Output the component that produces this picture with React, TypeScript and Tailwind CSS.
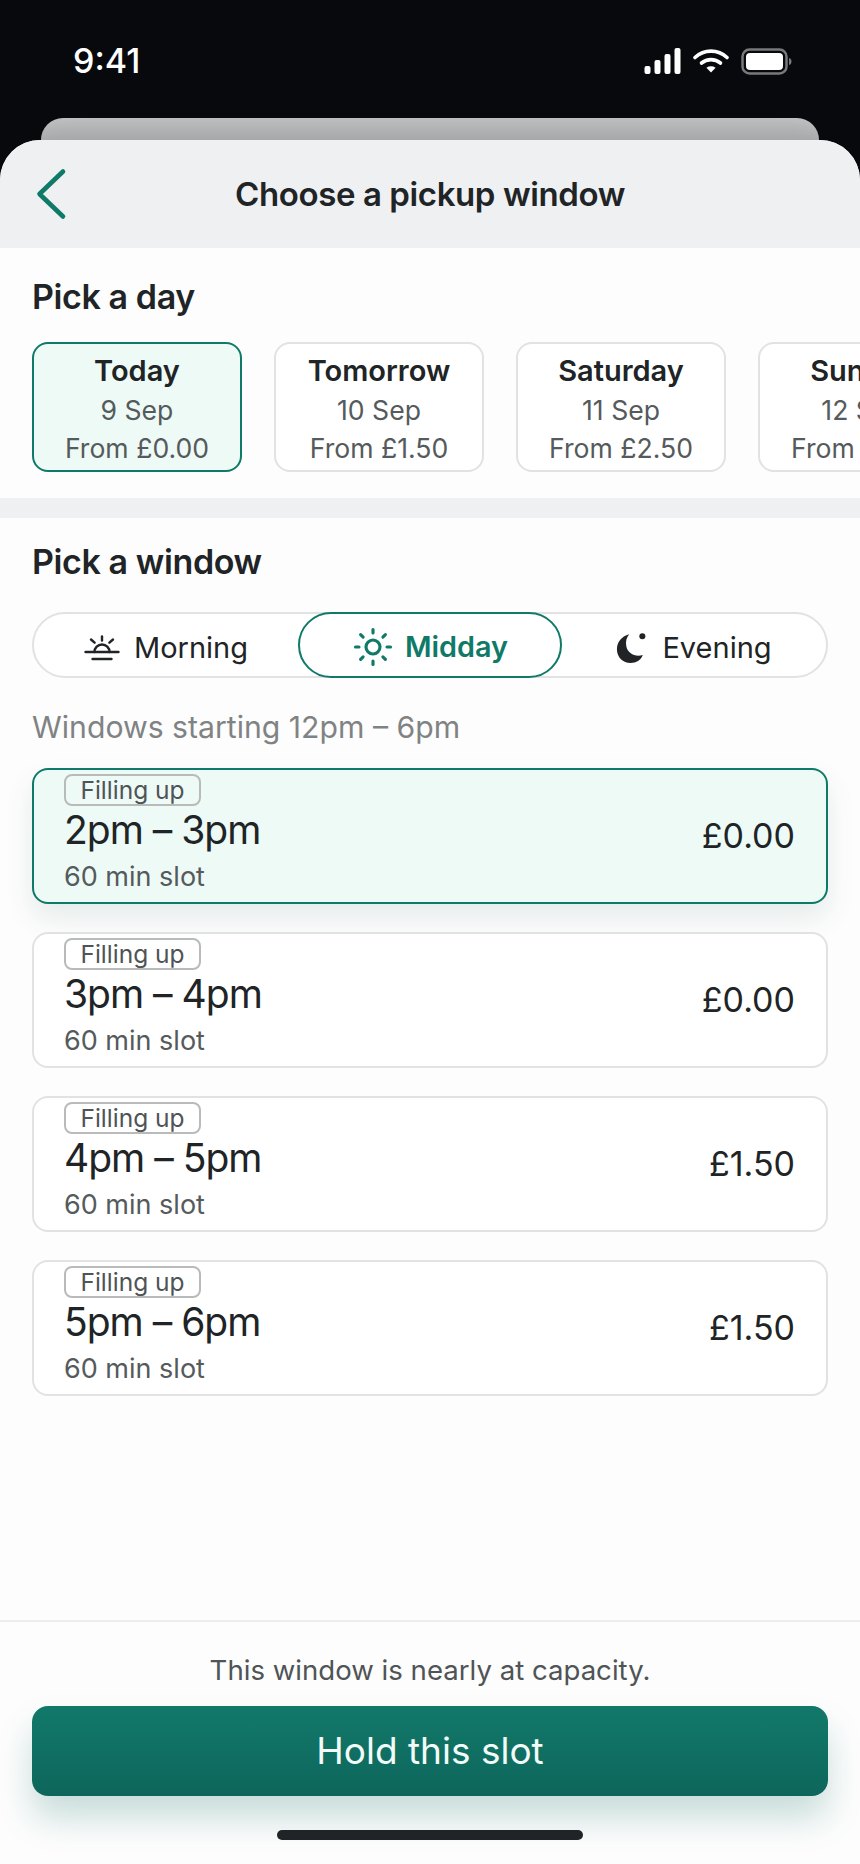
import { Sun } from "lucide-react";

const days = [
  { name: "Today", date: "9 Sep", price: "From £0.00", active: true },
  { name: "Tomorrow", date: "10 Sep", price: "From £1.50" },
  { name: "Saturday", date: "11 Sep", price: "From £2.50" },
  { name: "Sunday", date: "12 Sep", price: "From £2.50" },
];

const slots = [
  { time: "2pm – 3pm", price: "£0.00", active: true },
  { time: "3pm – 4pm", price: "£0.00" },
  { time: "4pm – 5pm", price: "£1.50" },
  { time: "5pm – 6pm", price: "£1.50" },
];

function StatusIcons() {
  return (
    <div className="flex items-start gap-[12px]">
      <svg width="37" height="26" viewBox="0 0 37 26" fill="white">
        <rect x="0.5" y="18" width="6" height="8" rx="2" />
        <rect x="10.500" y="12" width="6" height="14" rx="2" />
        <rect x="20.500" y="6" width="6" height="20" rx="2" />
        <rect x="30.500" y="0" width="6" height="26" rx="2" />
      </svg>
      <svg width="36" height="26" viewBox="0 0 36 26" fill="none" stroke="white" strokeWidth="3.6" strokeLinecap="round">
        <path d="M2 9.5C11 1 25 1 34 9.5" />
        <path d="M8.5 15C14 10.5 22 10.5 27.5 15" />
        <path d="M18 24.5l-4.6-4.8c2.8-1.800 6.400-1.800 9.200 0z" fill="white" stroke="none" />
      </svg>
      <svg width="51" height="27" viewBox="0 0 51 27" fill="none">
        <rect x="1.500" y="1.500" width="44" height="24" rx="7" stroke="#77797b" strokeWidth="2.500" />
        <rect x="5" y="5" width="37" height="17" rx="4" fill="white" />
        <path d="M48 10c2 .6 2.500 2 2.500 3.500S50 16.400 48 17z" fill="#77797b" />
      </svg>
    </div>
  );
}

function MorningIcon() {
  return (
    <svg width="36" height="26" viewBox="0 0 36 26" fill="none" stroke="#202426" strokeWidth="2.400" strokeLinecap="round">
      <path d="M1.500 17h33" />
      <path d="M8.500 24h19" />
      <path d="M10.500 17a7.500 7.500 0 0 1 15 0" />
      <path d="M18 1.500v4" />
      <path d="M7 4.500l3.600 3.200" />
      <path d="M29 4.500l-3.600 3.200" />
    </svg>
  );
}

function MoonIcon() {
  return (
    <svg width="32" height="32" viewBox="0 0 34 34" fill="#202426">
      <path d="M14 2.500C5.500 5 1 11 1 18.500C1 26.500 7.500 33 15.500 33C21.500 33 26.500 30 28.500 24.500C20 27 12.500 22.500 11 15.500C10 10.500 11 6 14 2.500Z" />
      <circle cx="28" cy="4.500" r="3.200" />
    </svg>
  );
}

export default function App() {
  return (
    <div className="w-[860px] h-[1864px] overflow-hidden bg-[#07090c] font-['Inter',sans-serif] text-[#202426]">
      <div className="h-[118px] flex justify-between pl-[73px] pr-[68px] pt-[48px]">
        <span className="text-[34px] leading-[26px] font-medium text-white">9:41</span>
        <StatusIcons />
      </div>
      <div className="h-[22px] mx-[41px] rounded-t-[30px] bg-gradient-to-b from-[#bbbcbd] to-[#a2a3a5] shadow-[inset_0_0_24px_rgba(255,255,255,0.12)]"></div>

      <div className="h-[1724px] flex flex-col rounded-t-[40px] overflow-hidden bg-[#fdfdfd]">
        <header className="relative h-[108px] shrink-0 bg-[#eef0f2] flex items-center justify-center">
          <svg className="absolute left-[35px] top-[28px]" width="32" height="52" viewBox="0 0 32 52" fill="none" stroke="#0f7a68" strokeWidth="4.600" strokeLinecap="round" strokeLinejoin="round">
            <path d="M28 3.500L4.500 26L28 48.500" />
          </svg>
          <h1 className="text-[33px] leading-[40px] font-semibold tracking-[-0.4px] text-[#202426]">Choose a pickup window</h1>
        </header>

        <section className="h-[250px] shrink-0 pt-[29px] pl-[32px] overflow-hidden">
          <h2 className="text-[34px] leading-[40px] font-semibold tracking-[-0.4px]">Pick a day</h2>
          <div className="mt-[25px] flex gap-[32px]">
            {days.map((d) => (
              <div
                key={d.name}
                className={
                  d.active
                    ? "w-[210px] h-[130px] shrink-0 rounded-[16px] border-2 border-[#0f7a68] bg-[#eefaf6] pt-[7px] flex flex-col items-center"
                    : "w-[210px] h-[130px] shrink-0 rounded-[16px] border-2 border-[#e2e2e2] bg-white pt-[7px] flex flex-col items-center"
                }
              >
                <span className="text-[29px] leading-[40px] font-semibold">{d.name}</span>
                <span className="text-[26.600px] leading-[39px] text-[#555a5c]">{d.date}</span>
                <span className="text-[26.600px] leading-[37px] text-[#555a5c]">{d.price}</span>
              </div>
            ))}
          </div>
        </section>

        <div className="h-[20px] shrink-0 bg-[#eef0f2]"></div>

        <section className="flex-1 pt-[24px] px-[32px]">
          <h2 className="text-[34px] leading-[40px] font-semibold tracking-[-0.4px]">Pick a window</h2>

          <div className="mt-[30px] h-[66px] rounded-full border-2 border-[#e2e2e2] bg-white flex items-center">
            <div className="w-[264px] pt-[5px] flex items-center justify-center gap-[14px] text-[29px]">
              <MorningIcon />
              <span>Morning</span>
            </div>
            <div className="w-[264px] h-[66px] shrink-0 rounded-full border-2 border-[#0f7a68] pt-[4px] flex items-center justify-center gap-[11px] text-[28.800px] font-semibold text-[#0f7a68]">
              <Sun size={42} strokeWidth={1.8} />
              <span>Midday</span>
            </div>
            <div className="flex-1 pt-[5px] flex items-center justify-center gap-[14px] text-[29px]">
              <MoonIcon />
              <span>Evening</span>
            </div>
          </div>

          <p className="mt-[29px] text-[30.200px] leading-[40px] text-[#808384]">Windows starting 12pm – 6pm</p>

          <div className="mt-[21px] flex flex-col gap-[28px]">
            {slots.map((s) => (
              <div
                key={s.time}
                className={
                  s.active
                    ? "h-[136px] rounded-[16px] border-2 border-[#0f7a68] bg-[#eefaf6] shadow-[0_14px_28px_rgba(15,80,70,0.1)] pl-[30px] pr-[31px] pt-[4px] flex justify-between items-center"
                    : "h-[136px] rounded-[16px] border-2 border-[#e2e2e2] bg-white pl-[30px] pr-[31px] pt-[4px] flex justify-between items-center"
                }
              >
                <div className="self-start">
                  <span className="block w-[137px] h-[32px] rounded-[8px] border-2 border-[#b9bbbb] text-center text-[24.500px] leading-[29px] text-[#4f5456]">Filling up</span>
                  <div className="text-[39px] leading-[46px] mt-[1px] tracking-[-1px]">{s.time}</div>
                  <div className="text-[27px] leading-[36px] mt-[6px] text-[#555a5c]">60 min slot</div>
                </div>
                <span className="mb-[4px] text-[34px] leading-[44px]">{s.price}</span>
              </div>
            ))}
          </div>
        </section>

        <footer className="shrink-0 border-t-2 border-[#eceded] pt-[28px] px-[32px] pb-[24px] flex flex-col items-center">
          <p className="text-[27.600px] leading-[40px] text-[#4f5456]">This window is nearly at capacity.</p>
          <button className="mt-[16px] w-full h-[90px] rounded-[16px] bg-gradient-to-b from-[#11796a] to-[#0e665b] shadow-[0_22px_34px_rgba(15,110,95,0.22)] text-[37px] font-normal text-[#f2fbf8]">
            Hold this slot
          </button>
          <div className="mt-[34px] w-[306px] h-[10px] rounded-full bg-[#202426]"></div>
        </footer>
      </div>
    </div>
  );
}
